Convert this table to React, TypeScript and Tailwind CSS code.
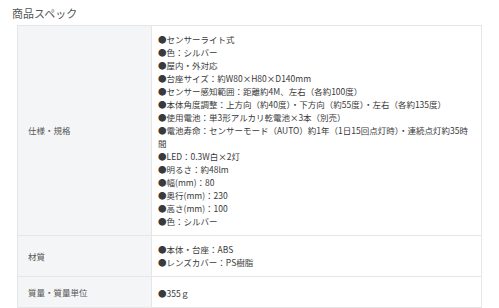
import React from 'react';

interface SpecRow {
  label: string;
  items: string[];
}

const rows: SpecRow[] = [
  {
    label: '仕様・規格',
    items: [
      'センサーライト式',
      '色：シルバー',
      '屋内・外対応',
      '台座サイズ：約W80×H80×D140mm',
      'センサー感知範囲：距離約4M、左右（各約100度）',
      '本体角度調整：上方向（約40度）・下方向（約55度）・左右（各約135度）',
      '使用電池：単3形アルカリ乾電池×3本（別売）',
      '電池寿命：センサーモード（AUTO）約1年（1日15回点灯時）・連続点灯約35時間',
      'LED：0.3W白×2灯',
      '明るさ：約48lm',
      '幅(mm)：80',
      '奥行(mm)：230',
      '高さ(mm)：100',
      '色：シルバー',
    ],
  },
  {
    label: '材質',
    items: ['本体・台座：ABS', 'レンズカバー：PS樹脂'],
  },
  {
    label: '質量・質量単位',
    items: ['355ｇ'],
  },
];

export default function App() {
  return (
    <div className="w-[499px] h-[308px] overflow-hidden bg-white text-[#3a3a3a] font-['Noto_Sans_CJK_JP','Noto_Sans',sans-serif]">
      <h2 className="pl-[12px] pt-[5px] text-[11px] leading-[16px] text-[#555]">商品スペック</h2>
      <div className="ml-[17px] mt-[4px] w-[465px] border border-[#e6e6e6]">
        {rows.map((row, i) => (
          <div
            key={row.label}
            className={`flex ${i > 0 ? 'border-t border-[#e6e6e6]' : ''}`}
          >
            <div className="w-[134px] shrink-0 bg-[#f4f5f7] border-r border-[#e6e6e6] flex items-center pl-[10px] text-[8.5px] text-[#555]">
              {row.label}
            </div>
            <ul
              className={`flex-1 px-[6px] text-[8.5px] leading-[13px] ${
                i === rows.length - 1 ? 'pt-[10px] pb-[7px]' : 'py-[7px]'
              }`}
            >
              {row.items.map((item) => (
                <li key={item}>●{item}</li>
              ))}
            </ul>
          </div>
        ))}
      </div>
    </div>
  );
}
